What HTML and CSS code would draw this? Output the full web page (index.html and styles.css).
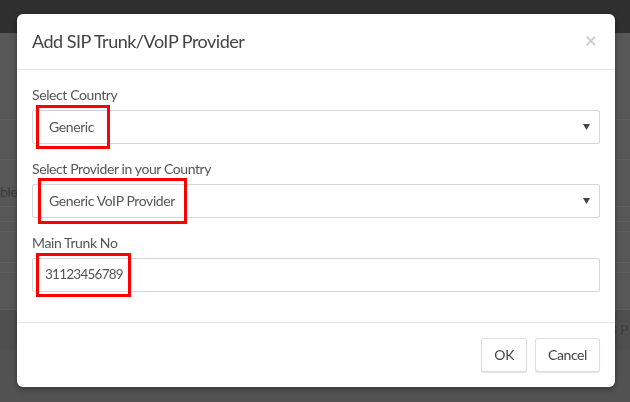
FILE: index.html
```html
<!DOCTYPE html>
<html>
<head>
<meta charset="utf-8">
<link rel="stylesheet" href="styles.css">
</head>
<body>
<div class="page">
  <header class="navbar"></header>
  <main class="content">
    <div class="bg-row h87"></div>
    <div class="bg-row h40"></div>
    <div class="bg-row h47 with-text"><span class="ghost-left">ble</span></div>
    <div class="bg-row h15"></div>
    <div class="bg-row h10"></div>
    <div class="bg-row h31"></div>
    <div class="bg-row h10"></div>
    <div class="bg-row h37"></div>
    <div class="bg-band"><span class="ghost-right">3 P</span></div>
    <div class="bg-rest"></div>
  </main>
</div>

<div class="modal-wrap">
  <div class="modal">
    <div class="modal-header">
      <h4 class="modal-title">Add SIP Trunk/VoIP Provider</h4>
      <span class="close">×</span>
    </div>
    <div class="modal-body">
      <div class="form-group">
        <label class="label">Select Country</label>
        <div class="select">
          <span class="select-text">Generic</span>
          <svg class="caret" width="7" height="6" viewBox="0 0 7 6"><path d="M0 0H7L3.5 6Z" fill="#444"/></svg>
          <span class="mark mark-1"></span>
        </div>
      </div>
      <div class="form-group">
        <label class="label">Select Provider in your Country</label>
        <div class="select">
          <span class="select-text">Generic VoIP Provider</span>
          <svg class="caret" width="7" height="6" viewBox="0 0 7 6"><path d="M0 0H7L3.5 6Z" fill="#444"/></svg>
          <span class="mark mark-2"></span>
        </div>
      </div>
      <div class="form-group">
        <label class="label">Main Trunk No</label>
        <div class="input">
          <span class="input-text">31123456789</span>
          <span class="mark mark-3"></span>
        </div>
      </div>
    </div>
    <div class="modal-footer">
      <button class="btn">OK</button>
      <button class="btn">Cancel</button>
    </div>
  </div>
</div>
</body>
</html>
```

FILE: styles.css
```css
* { box-sizing: border-box; }
html, body { margin: 0; padding: 0; }
body {
  width: 630px;
  height: 402px;
  overflow: hidden;
  font-family: "Lato", "Open Sans", sans-serif;
  font-size: 14px;
  line-height: 1.42857;
  letter-spacing: -0.4px;
  color: #444;
  background: #565656;
}
.page { display: flex; flex-direction: column; height: 402px; }
.navbar { height: 33px; background: #2f2f2f; flex: none; }
.content { flex: 1; display: flex; flex-direction: column; background: #575757; }
.bg-row { border-bottom: 1px solid #5f5f5f; flex: none; }
.h87 { height: 87px; }
.h40 { height: 40px; }
.h47 { height: 47px; }
.h15 { height: 15px; }
.h10 { height: 10px; }
.h31 { height: 31px; }
.h37 { height: 37px; }
.with-text { display: flex; align-items: flex-start; padding-top: 23px; }
.ghost-left { font-size: 14px; color: #3c3c3c; line-height: 18px; }
.bg-band {
  height: 40px; background: #4f4f4f; flex: none;
  display: flex; justify-content: flex-end; align-items: center;
  padding-right: 2px;
}
.ghost-right { font-size: 14px; color: #3c3c3c; white-space: nowrap; }
.bg-rest { flex: 1; background: #525252; }

.modal-wrap {
  position: fixed; inset: 0;
  display: flex; justify-content: flex-start; align-items: flex-start;
  padding: 14px 0 0 17px;
}
.modal {
  width: 598px;
  background: #fff;
  border-radius: 6px;
  box-shadow: 0 2px 6px rgba(0,0,0,0.35);
}
.modal-header {
  display: flex; justify-content: space-between; align-items: flex-start;
  padding: 15px;
  border-bottom: 1px solid #e5e5e5;
}
.modal-title {
  margin: 0;
  font-size: 18px;
  font-weight: 400;
  line-height: 25px;
  letter-spacing: -0.5px;
  color: #444;
}
.close {
  font-size: 21px; font-weight: 700; line-height: 1;
  color: #000; opacity: 0.2;
  margin: 0 3px 0 0;
  letter-spacing: 0;
}
.modal-body { padding: 15px; }
.form-group { margin-bottom: 15px; }
.label {
  display: block;
  margin-bottom: 5px;
  font-weight: 400;
  color: #555;
  line-height: 20px;
}
.select, .input {
  position: relative;
  height: 34px;
  border: 1px solid #d2d6de;
  border-radius: 2px;
  display: flex; align-items: center;
  color: #555;
}
.select { padding: 0 9px 0 16px; justify-content: space-between; }
.input { padding: 0 12px; }
.input-text { font-size: 13.5px; letter-spacing: -0.75px; }
.caret { flex: none; }
.mark {
  position: absolute;
  border: 3px solid #f00;
  pointer-events: none;
}
.mark-1 { left: 3px; top: -6px; width: 74px; height: 44px; }
.mark-2 { left: 5px; top: -7px; width: 149px; height: 46px; }
.mark-3 { left: 3px; top: -6px; width: 95px; height: 44px; }
.modal-footer {
  display: flex; justify-content: flex-end; gap: 8px;
  padding: 15px;
  border-top: 1px solid #e5e5e5;
}
.btn {
  height: 34px;
  padding: 6px 12px;
  font-family: inherit; font-size: 14px; line-height: 20px;
  letter-spacing: -0.4px;
  color: #444;
  background: #fff;
  border: 1px solid #ddd;
  border-radius: 3px;
  box-shadow: 0 1px 1px rgba(0,0,0,0.12);
}
```
